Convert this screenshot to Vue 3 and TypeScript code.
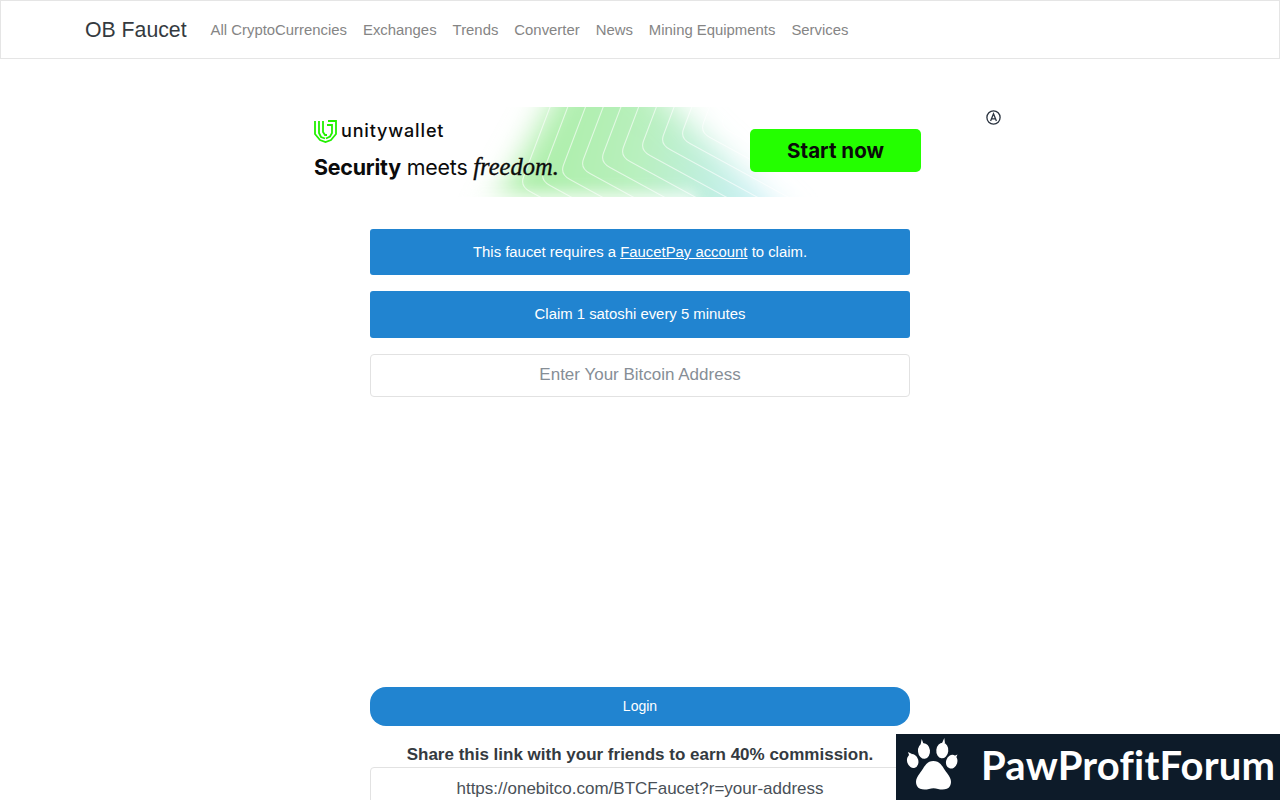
<script setup lang="ts">
const navLinks: string[] = [
  'All CryptoCurrencies',
  'Exchanges',
  'Trends',
  'Converter',
  'News',
  'Mining Equipments',
  'Services',
]

// each line: steep arm up to the top edge, rounded corner, shallow arm off to the lower right
const chevrons: string[] = [-3, -2, -1, 0, 1, 2, 3, 4, 5, 6, 7].map((i) => {
  const cx = 304 + i * 20
  const cy = 61 - i * 6
  const top = cx + 0.38 * (cy + 4)
  return `M${top} -4 L${cx + 3.5} ${cy - 9} Q${cx} ${cy} ${cx + 10} ${cy + 5.5} L${cx + 130} ${cy + 71}`
})
</script>

<template>
  <div class="page">
    <nav class="navbar">
      <a class="brand" href="#">OB Faucet</a>
      <ul class="nav-links">
        <li v-for="link in navLinks" :key="link"><a href="#">{{ link }}</a></li>
      </ul>
    </nav>

    <div class="ad">
      <svg class="ad-bg" width="728" height="90" viewBox="0 0 728 90">
        <defs>
          <linearGradient id="band" gradientUnits="userSpaceOnUse" x1="230" y1="20" x2="490" y2="70">
            <stop offset="0" stop-color="#a8eea2" />
            <stop offset="0.5" stop-color="#b8f0bc" />
            <stop offset="0.8" stop-color="#c0efe0" />
            <stop offset="1" stop-color="#c8eff6" />
          </linearGradient>
          <filter id="soft" x="-20%" y="-50%" width="140%" height="200%">
            <feGaussianBlur stdDeviation="15" />
          </filter>
          <filter id="softer" x="-20%" y="-100%" width="140%" height="300%">
            <feGaussianBlur stdDeviation="7" />
          </filter>
          <clipPath id="box"><rect width="728" height="90" /></clipPath>
        </defs>
        <g clip-path="url(#box)">
          <path d="M296 -40 L356 -40 L520 120 L208 120 Z" fill="url(#band)" filter="url(#soft)" />
          <rect x="190" y="84" width="230" height="24" fill="#fff" opacity="0.7" filter="url(#softer)" />
          <path
            v-for="(d, i) in chevrons"
            :key="i"
            :d="d"
            fill="none"
            stroke="#fff"
            stroke-opacity="0.6"
            stroke-width="1.1"
          />
        </g>
      </svg>
      <div class="ad-left">
        <div class="ad-logo">
          <svg width="23" height="23" viewBox="0 0 23 23" fill="none" stroke="#22f000" stroke-width="1.8">
            <path d="M1 1 V14 L6 20 L11.5 22 L17 20 L22 14 V1 H14" />
            <path d="M5 1 V13 L7 17 L11 18.5" />
            <path d="M9 1 V12 L11 15 H13" />
            <path d="M13 5 H18 V13 L16 16.5 L12 18.5" />
          </svg>
          <span>unitywallet</span>
        </div>
        <div class="ad-tagline"><b>Security</b> meets <i>freedom.</i></div>
      </div>
      <div class="ad-cta">Start now</div>
      <svg class="ad-mark" width="15" height="15" viewBox="0 0 15 15" fill="none" stroke="#2b3440">
        <circle cx="7.5" cy="7.5" r="6.6" stroke-width="1.3" />
        <path d="M4.6 11 L7.5 3.8 L10.4 11 M5.6 8.8 H9.4" stroke-width="1.3" />
      </svg>
    </div>

    <main class="faucet">
      <div class="alert alert-first">
        This faucet requires a <a href="#">FaucetPay account</a> to claim.
      </div>
      <div class="alert alert-second">Claim 1 satoshi every 5 minutes</div>
      <input class="field" type="text" placeholder="Enter Your Bitcoin Address" />
      <button class="login" type="button">Login</button>
      <p class="share">Share this link with your friends to earn 40% commission.</p>
      <input class="field field-link" type="text" value="https://onebitco.com/BTCFaucet?r=your-address" readonly />
    </main>

    <div class="paw-banner">
      <svg class="paw" width="54" height="54" viewBox="0 0 54 54" fill="#fff">
        <ellipse cx="6.7" cy="21" rx="5.6" ry="7" transform="rotate(-18 6.7 21)" />
        <ellipse cx="18" cy="11" rx="6" ry="7.8" transform="rotate(-6 18 11)" />
        <ellipse cx="36.3" cy="10.5" rx="6" ry="7.8" transform="rotate(6 36.3 10.5)" />
        <ellipse cx="45.7" cy="21.7" rx="5.6" ry="7" transform="rotate(18 45.7 21.7)" />
        <path d="M15.7 -1 L17.6 4 L14.6 4.4 Z M38.3 -2 L39 3.6 L36 3.2 Z M2 12 L6 14 L3.4 16 Z M51.5 14.5 L49.5 19 L47 16.5 Z" />
        <path d="M27.3 21 C35 21 37 28 41 33 C45 38 46 42 44 46 C42 50 36 50 32 49 C29 48 26 48 23 49 C19 50 13 50 11 46 C9 42 10 38 14 33 C18 28 20 21 27.3 21 Z" />
      </svg>
      <span>PawProfitForum</span>
    </div>
  </div>
</template>

<style scoped>
.page {
  position: relative;
  height: 800px;
  overflow: hidden;
  background: #fff;
  font-family: "Liberation Sans", Arial, sans-serif;
  color: #343a40;
}

.navbar {
  display: flex;
  align-items: center;
  box-sizing: border-box;
  height: 59px;
  padding: 0 84px;
  border: 1px solid #e5e5e5;
}

.brand {
  margin-right: 16px;
  font-size: 21.25px;
  line-height: 30px;
  color: #343a40;
  text-decoration: none;
}

.nav-links {
  display: flex;
  margin: 0;
  padding: 0;
  list-style: none;
}

.nav-links a {
  display: block;
  padding: 0 8px;
  font-size: 14.88px;
  color: #858585;
  text-decoration: none;
}

.ad {
  position: relative;
  display: flex;
  align-items: flex-start;
  justify-content: space-between;
  box-sizing: border-box;
  width: 728px;
  height: 90px;
  margin: 48px auto 32px;
  padding: 0 83px 0 38px;
}

.ad-bg {
  position: absolute;
  left: 0;
  top: 0;
}

.ad-mark {
  position: absolute;
  right: 3px;
  top: 3px;
}

.ad-left,
.ad-cta {
  position: relative;
}

.ad-left {
  margin-top: 13px;
  color: #0b0b0b;
}

.ad-logo {
  display: flex;
  align-items: center;
  gap: 4px;
  height: 23px;
  font-family: Inter, sans-serif;
  font-size: 18px;
  font-weight: 500;
  letter-spacing: 0.85px;
}

.ad-logo span {
  padding-bottom: 2px;
}

.ad-tagline {
  margin-top: 11px;
  font-family: Inter, sans-serif;
  font-size: 21.4px;
  line-height: 26px;
  letter-spacing: -0.2px;
  white-space: nowrap;
}

.ad-tagline i {
  font-family: "Liberation Serif", serif;
  font-size: 24.5px;
  letter-spacing: 0;
  -webkit-text-stroke: 0.35px #0b0b0b;
}

.ad-cta {
  width: 171px;
  height: 43px;
  margin-top: 22px;
  border-radius: 5px;
  background: #24ff00;
  color: #0a0a0a;
  font-family: Inter, sans-serif;
  font-size: 20.6px;
  font-weight: 700;
  line-height: 43px;
  text-align: center;
}

.faucet {
  width: 540px;
  margin: 0 auto;
  text-align: center;
}

.alert {
  box-sizing: border-box;
  margin-bottom: 16px;
  border-radius: 3px;
  background: #2184d0;
  color: #fff;
  font-size: 14.88px;
  line-height: 46px;
}

.alert-second {
  padding-bottom: 1px;
}

.alert a {
  color: #fff;
}

.field {
  display: block;
  box-sizing: border-box;
  width: 100%;
  height: 43px;
  padding: 0 12px 2px;
  border: 1px solid #e2e2e2;
  border-radius: 4px;
  background: #fff;
  color: #495057;
  font-family: inherit;
  font-size: 17px;
  text-align: center;
}

.field-link {
  padding-bottom: 0;
}

.field::placeholder {
  color: #868e96;
  opacity: 1;
}

.login {
  display: block;
  width: 100%;
  height: 39px;
  margin-top: 290px;
  padding: 0 0 2px;
  border: 0;
  border-radius: 16px;
  background: #2184d0;
  color: #fff;
  font-family: inherit;
  font-size: 14px;
}

.share {
  margin: 19px 0 2px;
  font-size: 17px;
  font-weight: 700;
  line-height: 20px;
}

.paw-banner {
  position: absolute;
  right: 0;
  bottom: 0;
  display: flex;
  align-items: center;
  gap: 21px;
  box-sizing: border-box;
  width: 384px;
  height: 66px;
  padding-left: 10px;
  background: #0d1b29;
  color: #fff;
  font-family: Lato, sans-serif;
  font-size: 40px;
  font-weight: 700;
  letter-spacing: 0.2px;
  white-space: nowrap;
}

.paw {
  overflow: visible;
}

.paw-banner span {
  padding-bottom: 4px;
}
</style>
